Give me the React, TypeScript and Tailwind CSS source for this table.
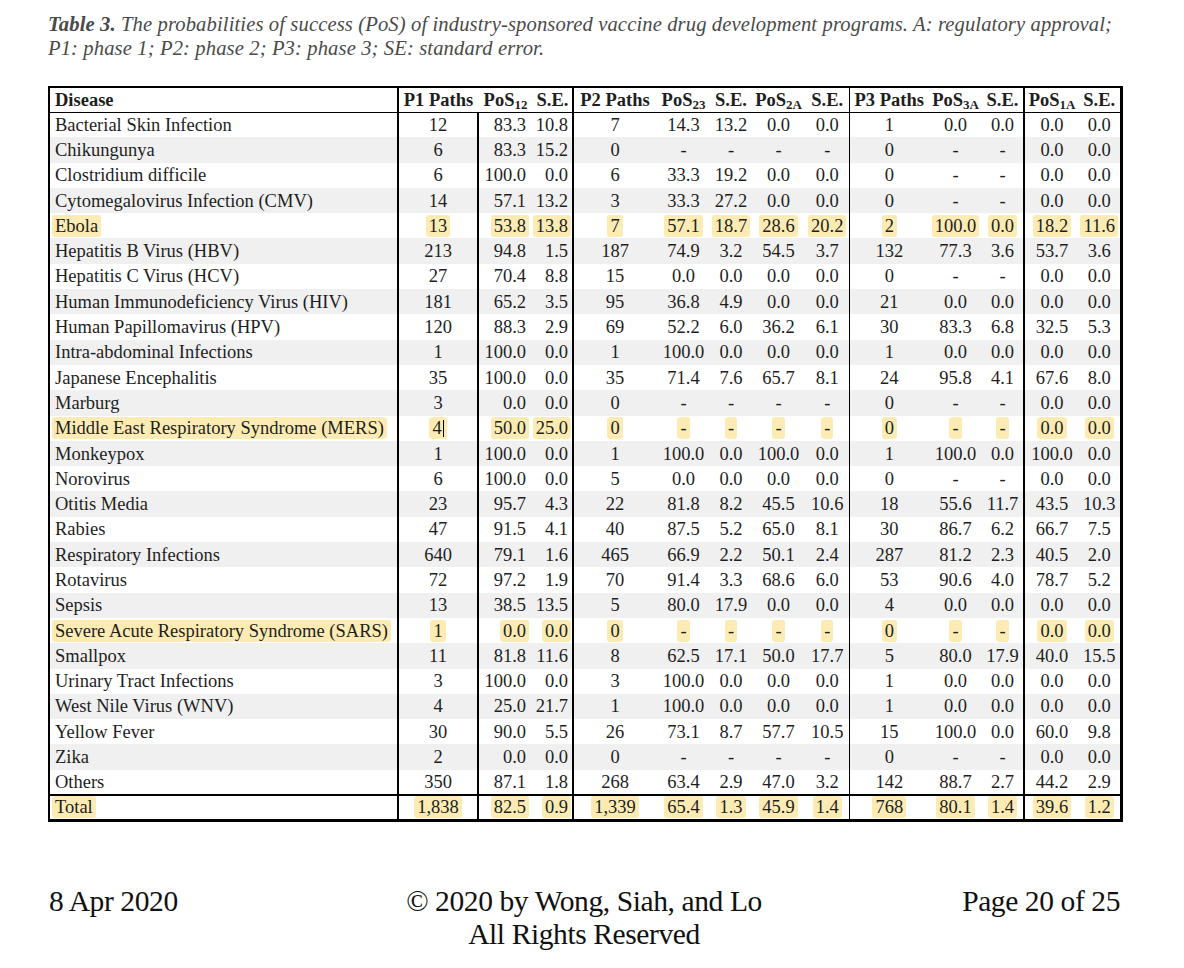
import React from "react";

type Row = { name: string; vals: string[]; hl?: boolean };

const rows: Row[] = [
    { name: "Bacterial Skin Infection", vals: ["12", "83.3", "10.8", "7", "14.3", "13.2", "0.0", "0.0", "1", "0.0", "0.0", "0.0", "0.0"] },
    { name: "Chikungunya", vals: ["6", "83.3", "15.2", "0", "-", "-", "-", "-", "0", "-", "-", "0.0", "0.0"] },
    { name: "Clostridium difficile", vals: ["6", "100.0", "0.0", "6", "33.3", "19.2", "0.0", "0.0", "0", "-", "-", "0.0", "0.0"] },
    { name: "Cytomegalovirus Infection (CMV)", vals: ["14", "57.1", "13.2", "3", "33.3", "27.2", "0.0", "0.0", "0", "-", "-", "0.0", "0.0"] },
    { name: "Ebola", vals: ["13", "53.8", "13.8", "7", "57.1", "18.7", "28.6", "20.2", "2", "100.0", "0.0", "18.2", "11.6"], hl: true },
    { name: "Hepatitis B Virus (HBV)", vals: ["213", "94.8", "1.5", "187", "74.9", "3.2", "54.5", "3.7", "132", "77.3", "3.6", "53.7", "3.6"] },
    { name: "Hepatitis C Virus (HCV)", vals: ["27", "70.4", "8.8", "15", "0.0", "0.0", "0.0", "0.0", "0", "-", "-", "0.0", "0.0"] },
    { name: "Human Immunodeficiency Virus (HIV)", vals: ["181", "65.2", "3.5", "95", "36.8", "4.9", "0.0", "0.0", "21", "0.0", "0.0", "0.0", "0.0"] },
    { name: "Human Papillomavirus (HPV)", vals: ["120", "88.3", "2.9", "69", "52.2", "6.0", "36.2", "6.1", "30", "83.3", "6.8", "32.5", "5.3"] },
    { name: "Intra-abdominal Infections", vals: ["1", "100.0", "0.0", "1", "100.0", "0.0", "0.0", "0.0", "1", "0.0", "0.0", "0.0", "0.0"] },
    { name: "Japanese Encephalitis", vals: ["35", "100.0", "0.0", "35", "71.4", "7.6", "65.7", "8.1", "24", "95.8", "4.1", "67.6", "8.0"] },
    { name: "Marburg", vals: ["3", "0.0", "0.0", "0", "-", "-", "-", "-", "0", "-", "-", "0.0", "0.0"] },
    { name: "Middle East Respiratory Syndrome (MERS)", vals: ["4", "50.0", "25.0", "0", "-", "-", "-", "-", "0", "-", "-", "0.0", "0.0"], hl: true },
    { name: "Monkeypox", vals: ["1", "100.0", "0.0", "1", "100.0", "0.0", "100.0", "0.0", "1", "100.0", "0.0", "100.0", "0.0"] },
    { name: "Norovirus", vals: ["6", "100.0", "0.0", "5", "0.0", "0.0", "0.0", "0.0", "0", "-", "-", "0.0", "0.0"] },
    { name: "Otitis Media", vals: ["23", "95.7", "4.3", "22", "81.8", "8.2", "45.5", "10.6", "18", "55.6", "11.7", "43.5", "10.3"] },
    { name: "Rabies", vals: ["47", "91.5", "4.1", "40", "87.5", "5.2", "65.0", "8.1", "30", "86.7", "6.2", "66.7", "7.5"] },
    { name: "Respiratory Infections", vals: ["640", "79.1", "1.6", "465", "66.9", "2.2", "50.1", "2.4", "287", "81.2", "2.3", "40.5", "2.0"] },
    { name: "Rotavirus", vals: ["72", "97.2", "1.9", "70", "91.4", "3.3", "68.6", "6.0", "53", "90.6", "4.0", "78.7", "5.2"] },
    { name: "Sepsis", vals: ["13", "38.5", "13.5", "5", "80.0", "17.9", "0.0", "0.0", "4", "0.0", "0.0", "0.0", "0.0"] },
    { name: "Severe Acute Respiratory Syndrome (SARS)", vals: ["1", "0.0", "0.0", "0", "-", "-", "-", "-", "0", "-", "-", "0.0", "0.0"], hl: true },
    { name: "Smallpox", vals: ["11", "81.8", "11.6", "8", "62.5", "17.1", "50.0", "17.7", "5", "80.0", "17.9", "40.0", "15.5"] },
    { name: "Urinary Tract Infections", vals: ["3", "100.0", "0.0", "3", "100.0", "0.0", "0.0", "0.0", "1", "0.0", "0.0", "0.0", "0.0"] },
    { name: "West Nile Virus (WNV)", vals: ["4", "25.0", "21.7", "1", "100.0", "0.0", "0.0", "0.0", "1", "0.0", "0.0", "0.0", "0.0"] },
    { name: "Yellow Fever", vals: ["30", "90.0", "5.5", "26", "73.1", "8.7", "57.7", "10.5", "15", "100.0", "0.0", "60.0", "9.8"] },
    { name: "Zika", vals: ["2", "0.0", "0.0", "0", "-", "-", "-", "-", "0", "-", "-", "0.0", "0.0"] },
    { name: "Others", vals: ["350", "87.1", "1.8", "268", "63.4", "2.9", "47.0", "3.2", "142", "88.7", "2.7", "44.2", "2.9"] },
];

const total: Row = {
    name: "Total",
    vals: ["1,838", "82.5", "0.9", "1,339", "65.4", "1.3", "45.9", "1.4", "768", "80.1", "1.4", "39.6", "1.2"],
    hl: true,
};

// per-column cell classes (alignment + vertical rules)
const colCls = [
    "text-center border-r-2 border-black",
    "text-right pr-[7px]",
    "text-right pr-[4px] border-r-2 border-black",
    "text-center",
    "text-center",
    "text-center",
    "text-center",
    "text-center border-r border-black",
    "text-center",
    "text-center",
    "text-center border-r-2 border-black",
    "text-center",
    "text-center",
];

const widths = ["w-[349px]", "w-[80px]", "w-[55px]", "w-[40px]", "w-[83px]", "w-[55px]", "w-[40px]", "w-[55px]", "w-[43px]", "w-[80px]", "w-[53px]", "w-[42px]", "w-[55px]", "w-[42px]"];

function Hl({ on, children }: { on?: boolean; children: React.ReactNode }) {
    if (!on) return <>{children}</>;
    return <span className="bg-[#fcecb3] rounded-[3px] px-[3px] -mx-[3px] py-[1px]">{children}</span>;
}

function Sub({ base, sub }: { base: string; sub: string }) {
    return (
        <>
            {base}
            <span className="text-[13px] leading-none relative top-[3px]">{sub}</span>
        </>
    );
}

function DataRow({ row, i, isTotal }: { row: Row; i: number; isTotal?: boolean }) {
    const shade = !isTotal && i % 2 === 1 ? "bg-[#f0f0f0]" : "bg-white";
    const border = isTotal ? "border-t-2 border-black" : "";
    return (
        <tr className={`h-[25.3px] ${shade} ${border}`}>
            <td className="pl-[5px] border-r-2 border-black text-left whitespace-nowrap">
                <Hl on={row.hl}>{row.name}</Hl>
            </td>
            {row.vals.map((v, j) => (
                <td key={j} className={`${j < colCls.length ? colCls[j] : "text-center"} whitespace-nowrap`}>
                    <Hl on={row.hl}>
                        {v}
                        {row.name.startsWith("Middle East") && j === 0 && (
                            <span className="inline-block w-[1px] h-[17px] bg-black align-[-3px] ml-[1px]" />
                        )}
                    </Hl>
                </td>
            ))}
        </tr>
    );
}

export default function App() {
    return (
        <div className="w-[1184px] h-[968px] bg-white pl-[48px] pr-[64px] pt-[12px] text-[#1e1e1e] font-['Liberation_Serif','Times_New_Roman',serif]">
            {/* Caption */}
            <div className="text-[20.6px] leading-[24px] italic text-[#4a4a4a] tracking-[0.12px] whitespace-nowrap">
                <span className="font-bold">Table 3.</span> The probabilities of success (PoS) of industry-sponsored vaccine drug development programs. A: regulatory approval;
                <br />
                P1: phase 1; P2: phase 2; P3: phase 3; SE: standard error.
            </div>

            {/* Table */}
            <table className="mt-[26px] w-[1072px] table-fixed border-collapse border-2 border-r-[3px] border-b-[3px] border-black text-[18.5px] leading-[20px]">
                <colgroup>
                    {widths.map((w, i) => (
                        <col key={i} className={w} />
                    ))}
                </colgroup>
                <thead>
                    <tr className="h-[25px] font-bold border-b border-black whitespace-nowrap">
                        <th className="pl-[5px] text-left border-r-2 border-black">Disease</th>
                        <th className="text-center">P1 Paths</th>
                        <th className="text-center"><Sub base="PoS" sub="12" /></th>
                        <th className="text-center border-r-2 border-black">S.E.</th>
                        <th className="text-center">P2 Paths</th>
                        <th className="text-center"><Sub base="PoS" sub="23" /></th>
                        <th className="text-center">S.E.</th>
                        <th className="text-center"><Sub base="PoS" sub="2A" /></th>
                        <th className="text-center border-r border-black">S.E.</th>
                        <th className="text-center">P3 Paths</th>
                        <th className="text-center"><Sub base="PoS" sub="3A" /></th>
                        <th className="text-center border-r-2 border-black">S.E.</th>
                        <th className="text-center"><Sub base="PoS" sub="1A" /></th>
                        <th className="text-center">S.E.</th>
                    </tr>
                </thead>
                <tbody>
                    {rows.map((r, i) => (
                        <DataRow key={r.name} row={r} i={i} />
                    ))}
                    <DataRow row={total} i={0} isTotal />
                </tbody>
            </table>

            {/* Footer */}
            <div className="mt-[63px] grid grid-cols-[1fr_auto_1fr] items-start text-[29.5px] leading-[33px] text-[#111] tracking-[-0.4px]">
                <div className="pl-[1px]">8 Apr 2020</div>
                <div className="text-center">
                    © 2020 by Wong, Siah, and Lo
                    <br />
                    All Rights Reserved
                </div>
                <div className="text-right">Page 20 of 25</div>
            </div>
        </div>
    );
}
